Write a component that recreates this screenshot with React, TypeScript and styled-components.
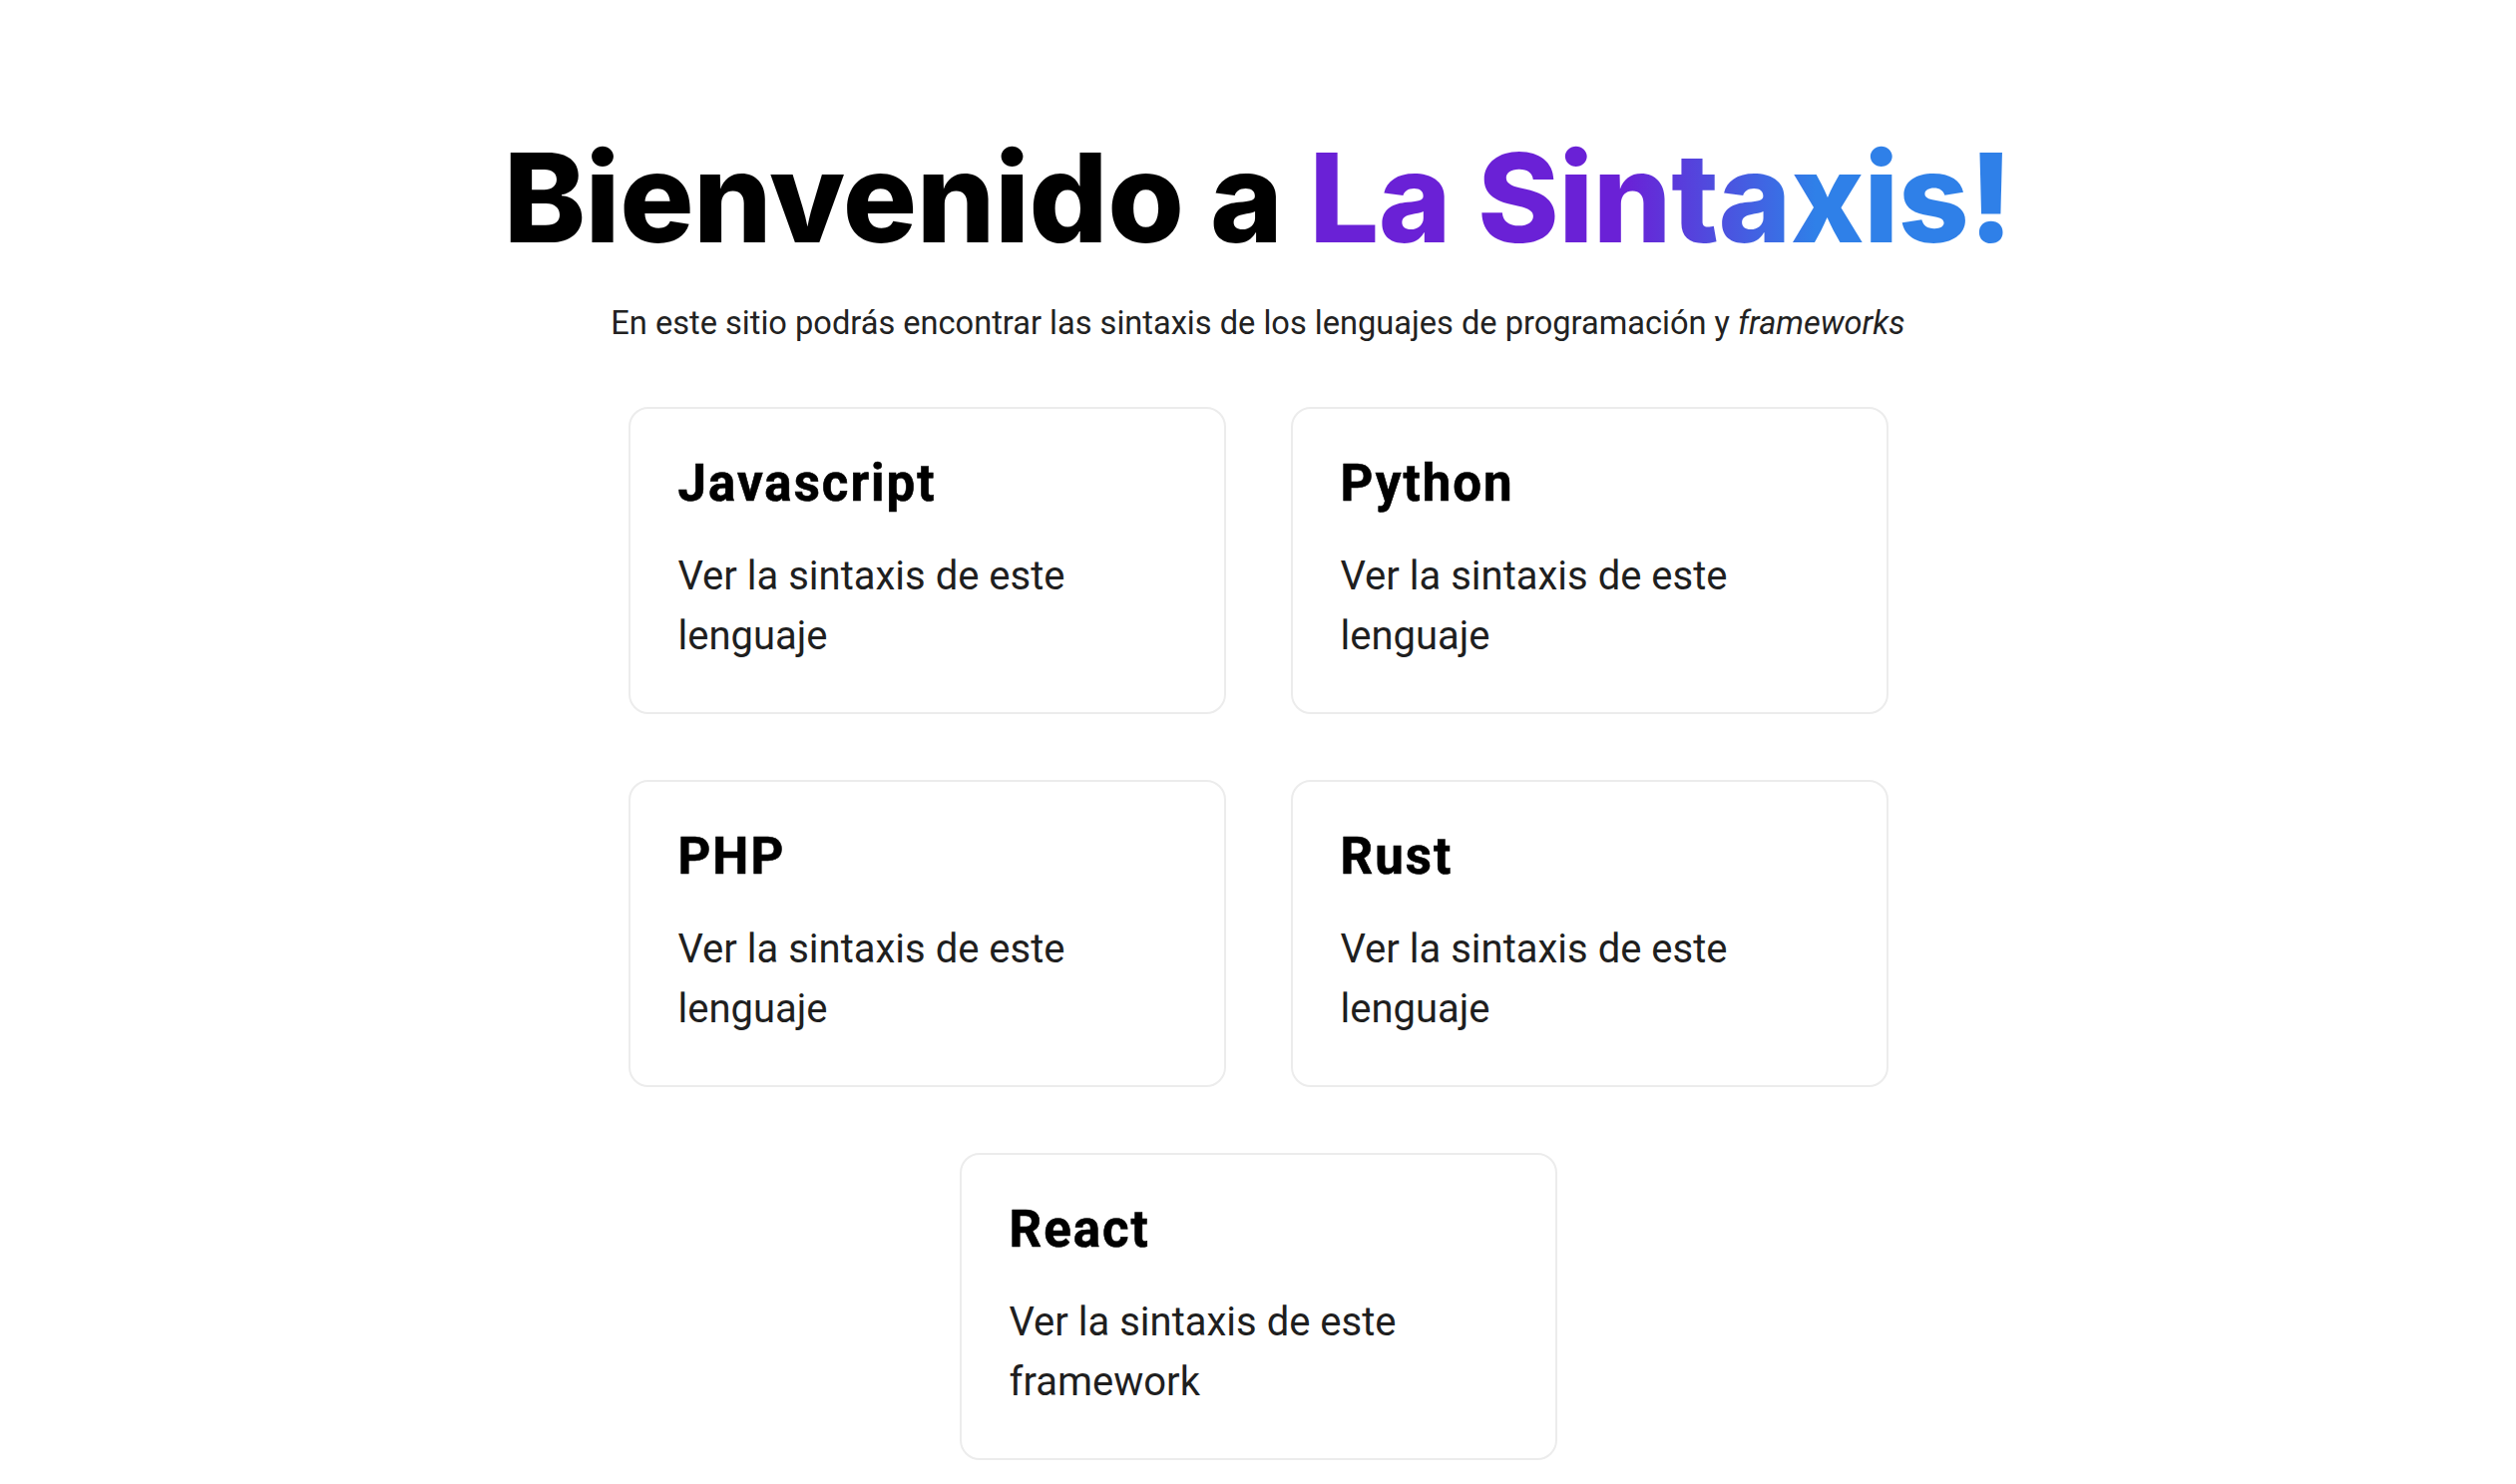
import { FC } from 'react';
import styled, { createGlobalStyle } from 'styled-components';

const GlobalStyle = createGlobalStyle`
  html, body {
    margin: 0;
    padding: 0;
    background: #ffffff;
  }
  body {
    font-family: Roboto, 'Liberation Sans', Arial, sans-serif;
    color: #1c1c1c;
  }
  * {
    box-sizing: border-box;
  }
`;

const StyledPage = styled.main`
  display: flex;
  flex-direction: column;
  align-items: center;
  padding: 123px 0 20px;
`;

const StyledTitle = styled.h1`
  margin: 0;
  font-family: Inter, 'Noto Sans', sans-serif;
  font-weight: 800;
  font-size: 124px;
  line-height: 150px;
  letter-spacing: -0.5px;
  color: #000000;
`;

const StyledHighlight = styled.span`
  background-image: linear-gradient(90deg, #6a21d6 0%, #6a21d6 45%, #2f80e8 72%, #2f80e8 100%);
  -webkit-background-clip: text;
  background-clip: text;
  color: transparent;
`;

const StyledSubtitle = styled.p`
  margin: 32px 0 0;
  font-size: 32.6px;
  line-height: 38px;
  color: #222222;
  em {
    font-style: italic;
  }
`;

const StyledGrid = styled.section`
  display: flex;
  flex-wrap: wrap;
  justify-content: center;
  gap: 66px 65px;
  width: 1263px;
  margin-top: 65px;
`;

const StyledCard = styled.a`
  display: block;
  width: 599px;
  padding: 48px 48px 46px;
  border: 2px solid #ececec;
  border-radius: 20px;
  background: #ffffff;
  text-decoration: none;
  color: inherit;
`;

const StyledCardTitle = styled.h2`
  margin: 0;
  font-size: 51px;
  line-height: 54px;
  font-weight: 700;
  letter-spacing: 2px;
  -webkit-text-stroke: 0.6px #000000;
  color: #000000;
`;

const StyledCardText = styled.p`
  margin: 36px 0 0;
  font-size: 40px;
  line-height: 60px;
  color: #1f1f1f;
  max-width: 420px;
`;

type Item = { name: string; kind: 'lenguaje' | 'framework' };

const items: Item[] = [
  { name: 'Javascript', kind: 'lenguaje' },
  { name: 'Python', kind: 'lenguaje' },
  { name: 'PHP', kind: 'lenguaje' },
  { name: 'Rust', kind: 'lenguaje' },
  { name: 'React', kind: 'framework' },
];

const App: FC = () => (
  <>
    <GlobalStyle />
    <StyledPage>
      <StyledTitle>
        Bienvenido a <StyledHighlight>La Sintaxis!</StyledHighlight>
      </StyledTitle>
      <StyledSubtitle>
        En este sitio podrás encontrar las sintaxis de los lenguajes de programación y{' '}
        <em>frameworks</em>
      </StyledSubtitle>
      <StyledGrid>
        {items.map((item) => (
          <StyledCard key={item.name} href="#">
            <StyledCardTitle>{item.name}</StyledCardTitle>
            <StyledCardText>Ver la sintaxis de este {item.kind}</StyledCardText>
          </StyledCard>
        ))}
      </StyledGrid>
    </StyledPage>
  </>
);

export default App;
